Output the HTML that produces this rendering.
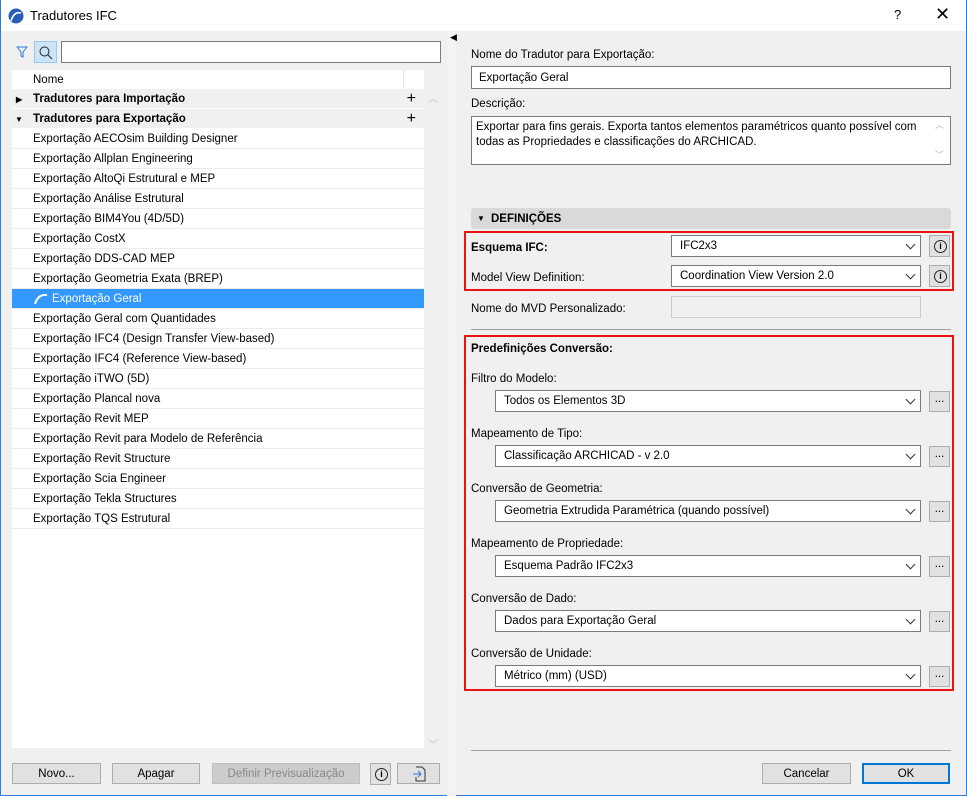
<!DOCTYPE html>
<html><head><meta charset="utf-8"><style>
*{box-sizing:border-box;margin:0;padding:0}
body{width:967px;height:796px;overflow:hidden;font-family:"Liberation Sans",sans-serif;font-size:11.5px;color:#000;background:#f0f0f0;position:relative}
.a{position:absolute}
.win{left:0;top:0;width:967px;height:796px;border:1px solid #2b7fd8;border-top:none}
.title{left:1px;top:0;width:965px;height:31px;background:#fff}
.list{left:12px;top:70px;width:412px;height:678px;background:#fff}
.row{position:absolute;left:0;width:412px;height:20px;line-height:21px;padding-left:21px;border-bottom:1px solid #ececec;white-space:nowrap}
.grp{background:#f0f0f0;font-weight:bold;border-bottom:1px solid #fff}
.plus{position:absolute;right:8px;top:0;font-weight:normal;font-size:16px;line-height:19px}
.inp{background:#fff;border:1px solid #7a7a7a;padding-left:7px;line-height:19px;white-space:nowrap}
.dd{background:#fff;border:1px solid #7a7a7a;padding-left:8px;line-height:21px;height:22px;white-space:nowrap}
.dd:after{content:"";position:absolute;right:6px;top:5px;width:6px;height:6px;border-right:1px solid #333;border-bottom:1px solid #333;transform:rotate(45deg)}
.btn{background:#e1e1e1;border:1px solid #adadad;text-align:center;line-height:20px;height:21px}
.dots{width:21px;height:21px;background:#e1e1e1;border:1px solid #adadad;text-align:center;line-height:14px}
.info{width:21px;height:22px;background:#e1e1e1;border:1px solid #adadad}
.info:after{content:"i";position:absolute;left:4px;top:4px;width:11px;height:11px;border:1px solid #222;border-radius:50%;font-size:9px;line-height:11px;text-align:center;font-weight:bold}
.redbox{border:2px solid #ee1111}
.t{line-height:14px;margin-top:1px}
</style></head><body>
<div class="a win"></div>
<div class="a title"></div>
<svg class="a" style="left:8px;top:8px" width="16" height="16"><circle cx="8" cy="8" r="7.5" fill="#2a5db8"/><path d="M3 13 Q6 3 13 5" stroke="#fff" stroke-width="1.6" fill="none"/></svg>
<div class="a" style="left:30px;top:8px;font-size:13px">Tradutores IFC</div>
<div class="a" style="left:894px;top:7px;font-size:13px">?</div>
<div class="a" style="left:935px;top:4px;font-size:18px">✕</div>

<svg class="a" style="left:16px;top:46px" width="12" height="12"><path d="M1 1 H11 L7 6 V11 L5 10 V6 Z" fill="none" stroke="#2a7ad8"/></svg>
<div class="a" style="left:34px;top:41px;width:23px;height:22px;background:#cce4f7;border:1px solid #99c9ef"></div>
<svg class="a" style="left:38px;top:45px" width="16" height="16"><circle cx="6.5" cy="6.5" r="4.5" fill="none" stroke="#222"/><path d="M10 10 L14 14" stroke="#222"/></svg>
<div class="a inp" style="left:61px;top:41px;width:380px;height:22px"></div>

<div class="a list">
<div class="row" style="top:0;background:#fff;border-bottom:1px solid #f0f0f0">Nome<div class="a" style="left:391px;top:0;width:1px;height:19px;background:#e5e5e5"></div></div>
<div class="row grp" style="top:19px">Tradutores para Importação<span class="a" style="left:4px;top:0;font-size:8px">▶</span><span class="plus">+</span></div>
<div class="row grp" style="top:39px">Tradutores para Exportação<span class="a" style="left:3px;top:0;font-size:8px">▼</span><span class="plus">+</span></div>
<div class="row" style="top:59px">Exportação AECOsim Building Designer</div>
<div class="row" style="top:79px">Exportação Allplan Engineering</div>
<div class="row" style="top:99px">Exportação AltoQi Estrutural e MEP</div>
<div class="row" style="top:119px">Exportação Análise Estrutural</div>
<div class="row" style="top:139px">Exportação BIM4You (4D/5D)</div>
<div class="row" style="top:159px">Exportação CostX</div>
<div class="row" style="top:179px">Exportação DDS-CAD MEP</div>
<div class="row" style="top:199px">Exportação Geometria Exata (BREP)</div>
<div class="row" style="top:219px;background:#3399ff;color:#fff;padding-left:40px"><svg class="a" style="left:22px;top:3px" width="14" height="13"><path d="M1 12 Q4 2 13 3" stroke="#fff" stroke-width="2" fill="none"/></svg>Exportação Geral</div>
<div class="row" style="top:239px">Exportação Geral com Quantidades</div>
<div class="row" style="top:259px">Exportação IFC4 (Design Transfer View-based)</div>
<div class="row" style="top:279px">Exportação IFC4 (Reference View-based)</div>
<div class="row" style="top:299px">Exportação iTWO (5D)</div>
<div class="row" style="top:319px">Exportação Plancal nova</div>
<div class="row" style="top:339px">Exportação Revit MEP</div>
<div class="row" style="top:359px">Exportação Revit para Modelo de Referência</div>
<div class="row" style="top:379px">Exportação Revit Structure</div>
<div class="row" style="top:399px">Exportação Scia Engineer</div>
<div class="row" style="top:419px">Exportação Tekla Structures</div>
<div class="row" style="top:439px">Exportação TQS Estrutural</div>
</div>
<div class="a" style="left:428px;top:90px;color:#bbb;font-size:10px">︿</div>
<div class="a" style="left:428px;top:736px;color:#bbb;font-size:10px">﹀</div>

<div class="a btn" style="left:12px;top:763px;width:89px">Novo...</div>
<div class="a btn" style="left:112px;top:763px;width:88px">Apagar</div>
<div class="a btn" style="left:212px;top:763px;width:148px;color:#888;background:#cccccc;border-color:#bfbfbf">Definir Previsualização</div>
<div class="a info" style="left:370px;top:763px"></div>
<div class="a btn" style="left:397px;top:763px;width:43px"><svg width="16" height="16" style="margin-top:2px"><path d="M5 1 H11 L14 4 V15 H5 V11" fill="none" stroke="#333"/><path d="M2 8 H10 M7 5 L10 8 L7 11" fill="none" stroke="#2a7ad8"/></svg></div>

<div class="a" style="left:447px;top:32px;width:9px;height:764px;background:#f3f3f3"></div>
<div class="a" style="left:450px;top:32px;font-size:9px">◀</div>

<div class="a t" style="left:471px;top:47px">Nome do Tradutor para Exportação:</div>
<div class="a inp" style="left:471px;top:66px;width:480px;height:23px;line-height:22px">Exportação Geral</div>
<div class="a t" style="left:471px;top:96px">Descrição:</div>
<div class="a inp" style="left:471px;top:116px;width:480px;height:49px;line-height:15px;padding-top:3px;padding-left:4px;white-space:normal;padding-right:24px">Exportar para fins gerais. Exporta tantos elementos paramétricos quanto possível com todas as Propriedades e classificações do ARCHICAD.</div>
<div class="a" style="left:935px;top:118px;color:#bbb;font-size:9px">︿</div>
<div class="a" style="left:935px;top:148px;color:#bbb;font-size:9px">﹀</div>

<div class="a" style="left:471px;top:208px;width:480px;height:21px;background:#d9d9d9;border-radius:3px;font-weight:bold;line-height:22px;padding-left:20px">DEFINIÇÕES<span class="a" style="left:6px;top:0;font-size:8px">▼</span></div>
<div class="a redbox" style="left:464px;top:231px;width:490px;height:60px"></div>
<div class="a t" style="left:471px;top:240px;font-weight:bold">Esquema IFC:</div>
<div class="a dd" style="left:671px;top:235px;width:250px">IFC2x3</div>
<div class="a info" style="left:929px;top:235px"></div>
<div class="a t" style="left:471px;top:270px">Model View Definition:</div>
<div class="a dd" style="left:671px;top:265px;width:250px">Coordination View Version 2.0</div>
<div class="a info" style="left:929px;top:265px"></div>
<div class="a t" style="left:471px;top:301px">Nome do MVD Personalizado:</div>
<div class="a" style="left:671px;top:296px;width:250px;height:22px;border:1px solid #ccc;background:#f0f0f0"></div>
<div class="a" style="left:471px;top:329px;width:480px;height:1px;background:#a0a0a0"></div>

<div class="a redbox" style="left:464px;top:335px;width:490px;height:356px"></div>
<div class="a t" style="left:471px;top:341px;font-weight:bold">Predefinições Conversão:</div>

<div class="a t" style="left:471px;top:371px">Filtro do Modelo:</div>
<div class="a dd" style="left:495px;top:390px;width:426px">Todos os Elementos 3D</div>
<div class="a dots" style="left:929px;top:391px">...</div>
<div class="a t" style="left:471px;top:426px">Mapeamento de Tipo:</div>
<div class="a dd" style="left:495px;top:445px;width:426px">Classificação ARCHICAD - v 2.0</div>
<div class="a dots" style="left:929px;top:446px">...</div>
<div class="a t" style="left:471px;top:481px">Conversão de Geometria:</div>
<div class="a dd" style="left:495px;top:500px;width:426px">Geometria Extrudida Paramétrica (quando possível)</div>
<div class="a dots" style="left:929px;top:501px">...</div>
<div class="a t" style="left:471px;top:536px">Mapeamento de Propriedade:</div>
<div class="a dd" style="left:495px;top:555px;width:426px">Esquema Padrão IFC2x3</div>
<div class="a dots" style="left:929px;top:556px">...</div>
<div class="a t" style="left:471px;top:591px">Conversão de Dado:</div>
<div class="a dd" style="left:495px;top:610px;width:426px">Dados para Exportação Geral</div>
<div class="a dots" style="left:929px;top:611px">...</div>
<div class="a t" style="left:471px;top:646px">Conversão de Unidade:</div>
<div class="a dd" style="left:495px;top:665px;width:426px">Métrico (mm) (USD)</div>
<div class="a dots" style="left:929px;top:666px">...</div>

<div class="a" style="left:471px;top:750px;width:480px;height:1px;background:#a0a0a0"></div>
<div class="a btn" style="left:762px;top:763px;width:89px">Cancelar</div>
<div class="a btn" style="left:862px;top:763px;width:88px;border:2px solid #0078d7;line-height:18px">OK</div>
</body></html>
